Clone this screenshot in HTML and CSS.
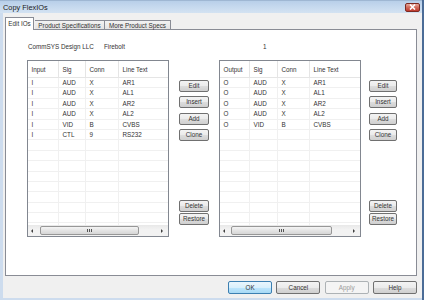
FILE: index.html
```html
<!DOCTYPE html>
<html lang="en">
<head>
  <meta charset="UTF-8" />
  <title>Copy FlexIOs</title>
  <link rel="stylesheet" href="styles.css">
</head>
<body>
<div class="window">
  <div class="titlebar">
    <span class="title">Copy FlexIOs</span>
    <span class="close">
      <svg width="7" height="6" viewBox="0 0 7 6"><path d="M1 0.5 L6 5.5 M6 0.5 L1 5.5" stroke="#fff" stroke-width="1.6"/></svg>
    </span>
  </div>

  <div class="client">
    <div class="tabs">
      <div class="tab active">Edit IOs</div>
      <div class="tab t2">Product Specifications</div>
      <div class="tab t3">More Product Specs</div>
    </div>

    <div class="panel">
      <div class="info">
        <span class="maker">CommSYS Design LLC</span>
        <span class="model">Firebolt</span>
        <span>1</span>
      </div>

      <div class="groups">
        <!-- inputs -->
        <div class="list in">
          <div class="row head"><span>Input</span><span>Sig</span><span>Conn</span><span>Line Text</span></div>
          <div class="rows">
            <div class="row"><span>I</span><span>AUD</span><span>X</span><span>AR1</span></div>
            <div class="row"><span>I</span><span>AUD</span><span>X</span><span>AL1</span></div>
            <div class="row"><span>I</span><span>AUD</span><span>X</span><span>AR2</span></div>
            <div class="row"><span>I</span><span>AUD</span><span>X</span><span>AL2</span></div>
            <div class="row"><span>I</span><span>VID</span><span>B</span><span>CVBS</span></div>
            <div class="row"><span>I</span><span>CTL</span><span>9</span><span>RS232</span></div>
            <div class="row"><span></span><span></span><span></span><span></span></div>
            <div class="row"><span></span><span></span><span></span><span></span></div>
            <div class="row"><span></span><span></span><span></span><span></span></div>
            <div class="row"><span></span><span></span><span></span><span></span></div>
            <div class="row"><span></span><span></span><span></span><span></span></div>
            <div class="row"><span></span><span></span><span></span><span></span></div>
            <div class="row"><span></span><span></span><span></span><span></span></div>
            <div class="row"><span></span><span></span><span></span><span></span></div>
            <div class="row"><span></span><span></span><span></span><span></span></div>
          </div>
          <div class="hscroll">
            <span class="arrow l"></span>
            <span class="thumb"><i></i><i></i><i></i></span>
            <span class="arrow r"></span>
          </div>
        </div>

        <div class="btn-col">
          <div class="btn-group">
            <button class="btn">Edit</button>
            <button class="btn">Insert</button>
            <button class="btn">Add</button>
            <button class="btn">Clone</button>
          </div>
          <div class="btn-group tight">
            <button class="btn">Delete</button>
            <button class="btn">Restore</button>
          </div>
        </div>

        <!-- outputs -->
        <div class="list out">
          <div class="row head"><span>Output</span><span>Sig</span><span>Conn</span><span>Line Text</span></div>
          <div class="rows">
            <div class="row"><span>O</span><span>AUD</span><span>X</span><span>AR1</span></div>
            <div class="row"><span>O</span><span>AUD</span><span>X</span><span>AL1</span></div>
            <div class="row"><span>O</span><span>AUD</span><span>X</span><span>AR2</span></div>
            <div class="row"><span>O</span><span>AUD</span><span>X</span><span>AL2</span></div>
            <div class="row"><span>O</span><span>VID</span><span>B</span><span>CVBS</span></div>
            <div class="row"><span></span><span></span><span></span><span></span></div>
            <div class="row"><span></span><span></span><span></span><span></span></div>
            <div class="row"><span></span><span></span><span></span><span></span></div>
            <div class="row"><span></span><span></span><span></span><span></span></div>
            <div class="row"><span></span><span></span><span></span><span></span></div>
            <div class="row"><span></span><span></span><span></span><span></span></div>
            <div class="row"><span></span><span></span><span></span><span></span></div>
            <div class="row"><span></span><span></span><span></span><span></span></div>
            <div class="row"><span></span><span></span><span></span><span></span></div>
            <div class="row"><span></span><span></span><span></span><span></span></div>
          </div>
          <div class="hscroll">
            <span class="arrow l"></span>
            <span class="thumb"><i></i><i></i><i></i></span>
            <span class="arrow r"></span>
          </div>
        </div>

        <div class="btn-col narrow">
          <div class="btn-group">
            <button class="btn">Edit</button>
            <button class="btn">Insert</button>
            <button class="btn">Add</button>
            <button class="btn">Clone</button>
          </div>
          <div class="btn-group tight">
            <button class="btn">Delete</button>
            <button class="btn">Restore</button>
          </div>
        </div>
      </div>
    </div>

    <div class="footer">
      <button class="btn big default">OK</button>
      <button class="btn big">Cancel</button>
      <button class="btn big" disabled>Apply</button>
      <button class="btn big">Help</button>
    </div>
  </div>
</div>
</body>
</html>
```

FILE: styles.css
```css
body {
  margin: 0;
  width: 424px;
  height: 300px;
  overflow: hidden;
  font-family: "Liberation Sans", Arial, sans-serif;
  font-size: 6.3px;
  color: #333;
  background: #cddcee;
}
.window {
  height: 300px;
  box-sizing: border-box;
  border-right: 2px solid #4b6c97;
  padding-bottom: 2px;
  background: #cddcee;
  display: flex;
  flex-direction: column;
}

/* title bar */
.titlebar {
  height: 13px;
  flex: none;
  display: flex;
  align-items: center;
  padding-left: 3px;
  background: linear-gradient(#b8cfe9, #c9dbef 60%, #d3e2f2);
  border-top: 1px solid #9fb7d3;
  box-sizing: border-box;
}
.title { font-size: 7.4px; color: #1a1a1a; }
.close {
  margin-left: auto;
  margin-right: 2px;
  width: 15px;
  height: 9px;
  box-sizing: border-box;
  border: 1px solid #7d2a22;
  border-radius: 2px;
  background: linear-gradient(#e7a799, #d0695a 50%, #c0392d);
  display: flex;
  align-items: center;
  justify-content: center;
}
.close svg { display: block; }

/* client area */
.client {
  flex: 1;
  margin-left: 3px;
  padding-right: 5px;
  padding-left: 2px;
  background: #f0f0f0;
  display: flex;
  flex-direction: column;
}

.tabs {
  margin-top: 4px;
  height: 12px;
  display: flex;
  align-items: flex-end;
  position: relative;
  z-index: 1;
}
.tab {
  height: 9px;
  box-sizing: border-box;
  border: 1px solid #898c95;
  border-bottom: none;
  background: linear-gradient(#f2f2f2, #e3e3e3);
  line-height: 9px;
  text-align: center;
}
.tab.active {
  width: 29px;
  height: 13px;
  margin-bottom: -1px;
  background: #fff;
  line-height: 12px;
}
.tab.t2 { width: 70px; margin-left: 1px; border-left: none; border-right: 1px solid #898c95; }
.tab.t3 { width: 66px; border-left: none; }

.panel {
  height: 247px;
  box-sizing: border-box;
  border: 1px solid #898c95;
  background: #fff;
  padding: 13px 0 0 21px;
}

.info { height: 8px; line-height: 8px; display: flex; }
.maker { width: 76px; padding-left: 1px; }
.model { width: 159px; }

.groups { display: flex; margin-top: 9px; }

/* list views */
.list {
  width: 142px;
  height: 177px;
  box-sizing: border-box;
  border: 1px solid #828790;
  display: flex;
  flex-direction: column;
  background: #fff;
}
.row {
  display: grid;
  grid-template-columns: 31px 27px 33px 1fr;
  height: 10.4px;
  box-sizing: border-box;
  border-bottom: 1px solid #f0f0f0;
}
.out .row { grid-template-columns: 30px 28px 32px 1fr; }
.row span {
  border-right: 1px solid #f0f0f0;
  padding-left: 3.5px;
  line-height: 10px;
  white-space: nowrap;
  overflow: hidden;
}
.row span:last-child { border-right: none; }
.row.head {
  height: 17px;
  border-bottom: 1px solid #e5e5e5;
  flex: none;
}
.row.head span {
  line-height: 17px;
  border-right-color: #e5e5e5;
}
.rows { flex: 1; overflow: hidden; }

.hscroll {
  height: 11px;
  flex: none;
  display: flex;
  align-items: center;
  background: linear-gradient(#e8e8e8, #f2f2f2 40%, #f2f2f2);
}
.arrow {
  width: 0;
  height: 0;
  border-top: 2px solid transparent;
  border-bottom: 2px solid transparent;
}
.arrow.l { border-right: 2px solid #404040; margin-left: 3px; }
.arrow.r { border-left: 2px solid #404040; margin-left: auto; margin-right: 5px; }
.thumb {
  width: 99px;
  height: 9px;
  margin-left: 7px;
  box-sizing: border-box;
  border: 1px solid #979797;
  border-radius: 2px;
  background: linear-gradient(#f4f4f4, #e4e4e4 50%, #d6d6d6);
  display: flex;
  align-items: center;
  justify-content: center;
  gap: 1px;
}
.out .thumb { width: 101px; margin-left: 6px; }
.thumb i { width: 1px; height: 3px; background: #555; }

/* buttons */
.btn-col {
  width: 30px;
  margin-left: 10px;
  margin-right: 10px;
  padding: 20px 0 12px;
  display: flex;
  flex-direction: column;
  justify-content: space-between;
}
.btn-col.narrow { width: 28px; margin-left: 8px; margin-right: 0; }
.btn-group { display: flex; flex-direction: column; gap: 4.3px; }
.btn-group.tight { gap: 1px; }
.btn {
  height: 12px;
  padding: 0;
  box-sizing: border-box;
  border: 1px solid #707070;
  border-radius: 2px;
  background: linear-gradient(#f3f3f3, #ebebeb 50%, #dddddd 51%, #cfcfcf);
  font-family: "Liberation Sans", Arial, sans-serif;
  font-size: 6.3px;
  color: #333;
  line-height: 10px;
}

.footer {
  margin-top: 5px;
  display: flex;
  justify-content: flex-end;
  gap: 4.3px;
}
.btn.big { width: 44px; height: 13px; }
.btn.default {
  border-color: #3c7fb1;
  background: linear-gradient(#eaf6fd, #d9f0fc 50%, #bee6fd 51%, #a7d9f5);
}
.btn:disabled {
  border-color: #adb2b5;
  background: #f4f4f4;
  color: #9a9a9a;
}
```
